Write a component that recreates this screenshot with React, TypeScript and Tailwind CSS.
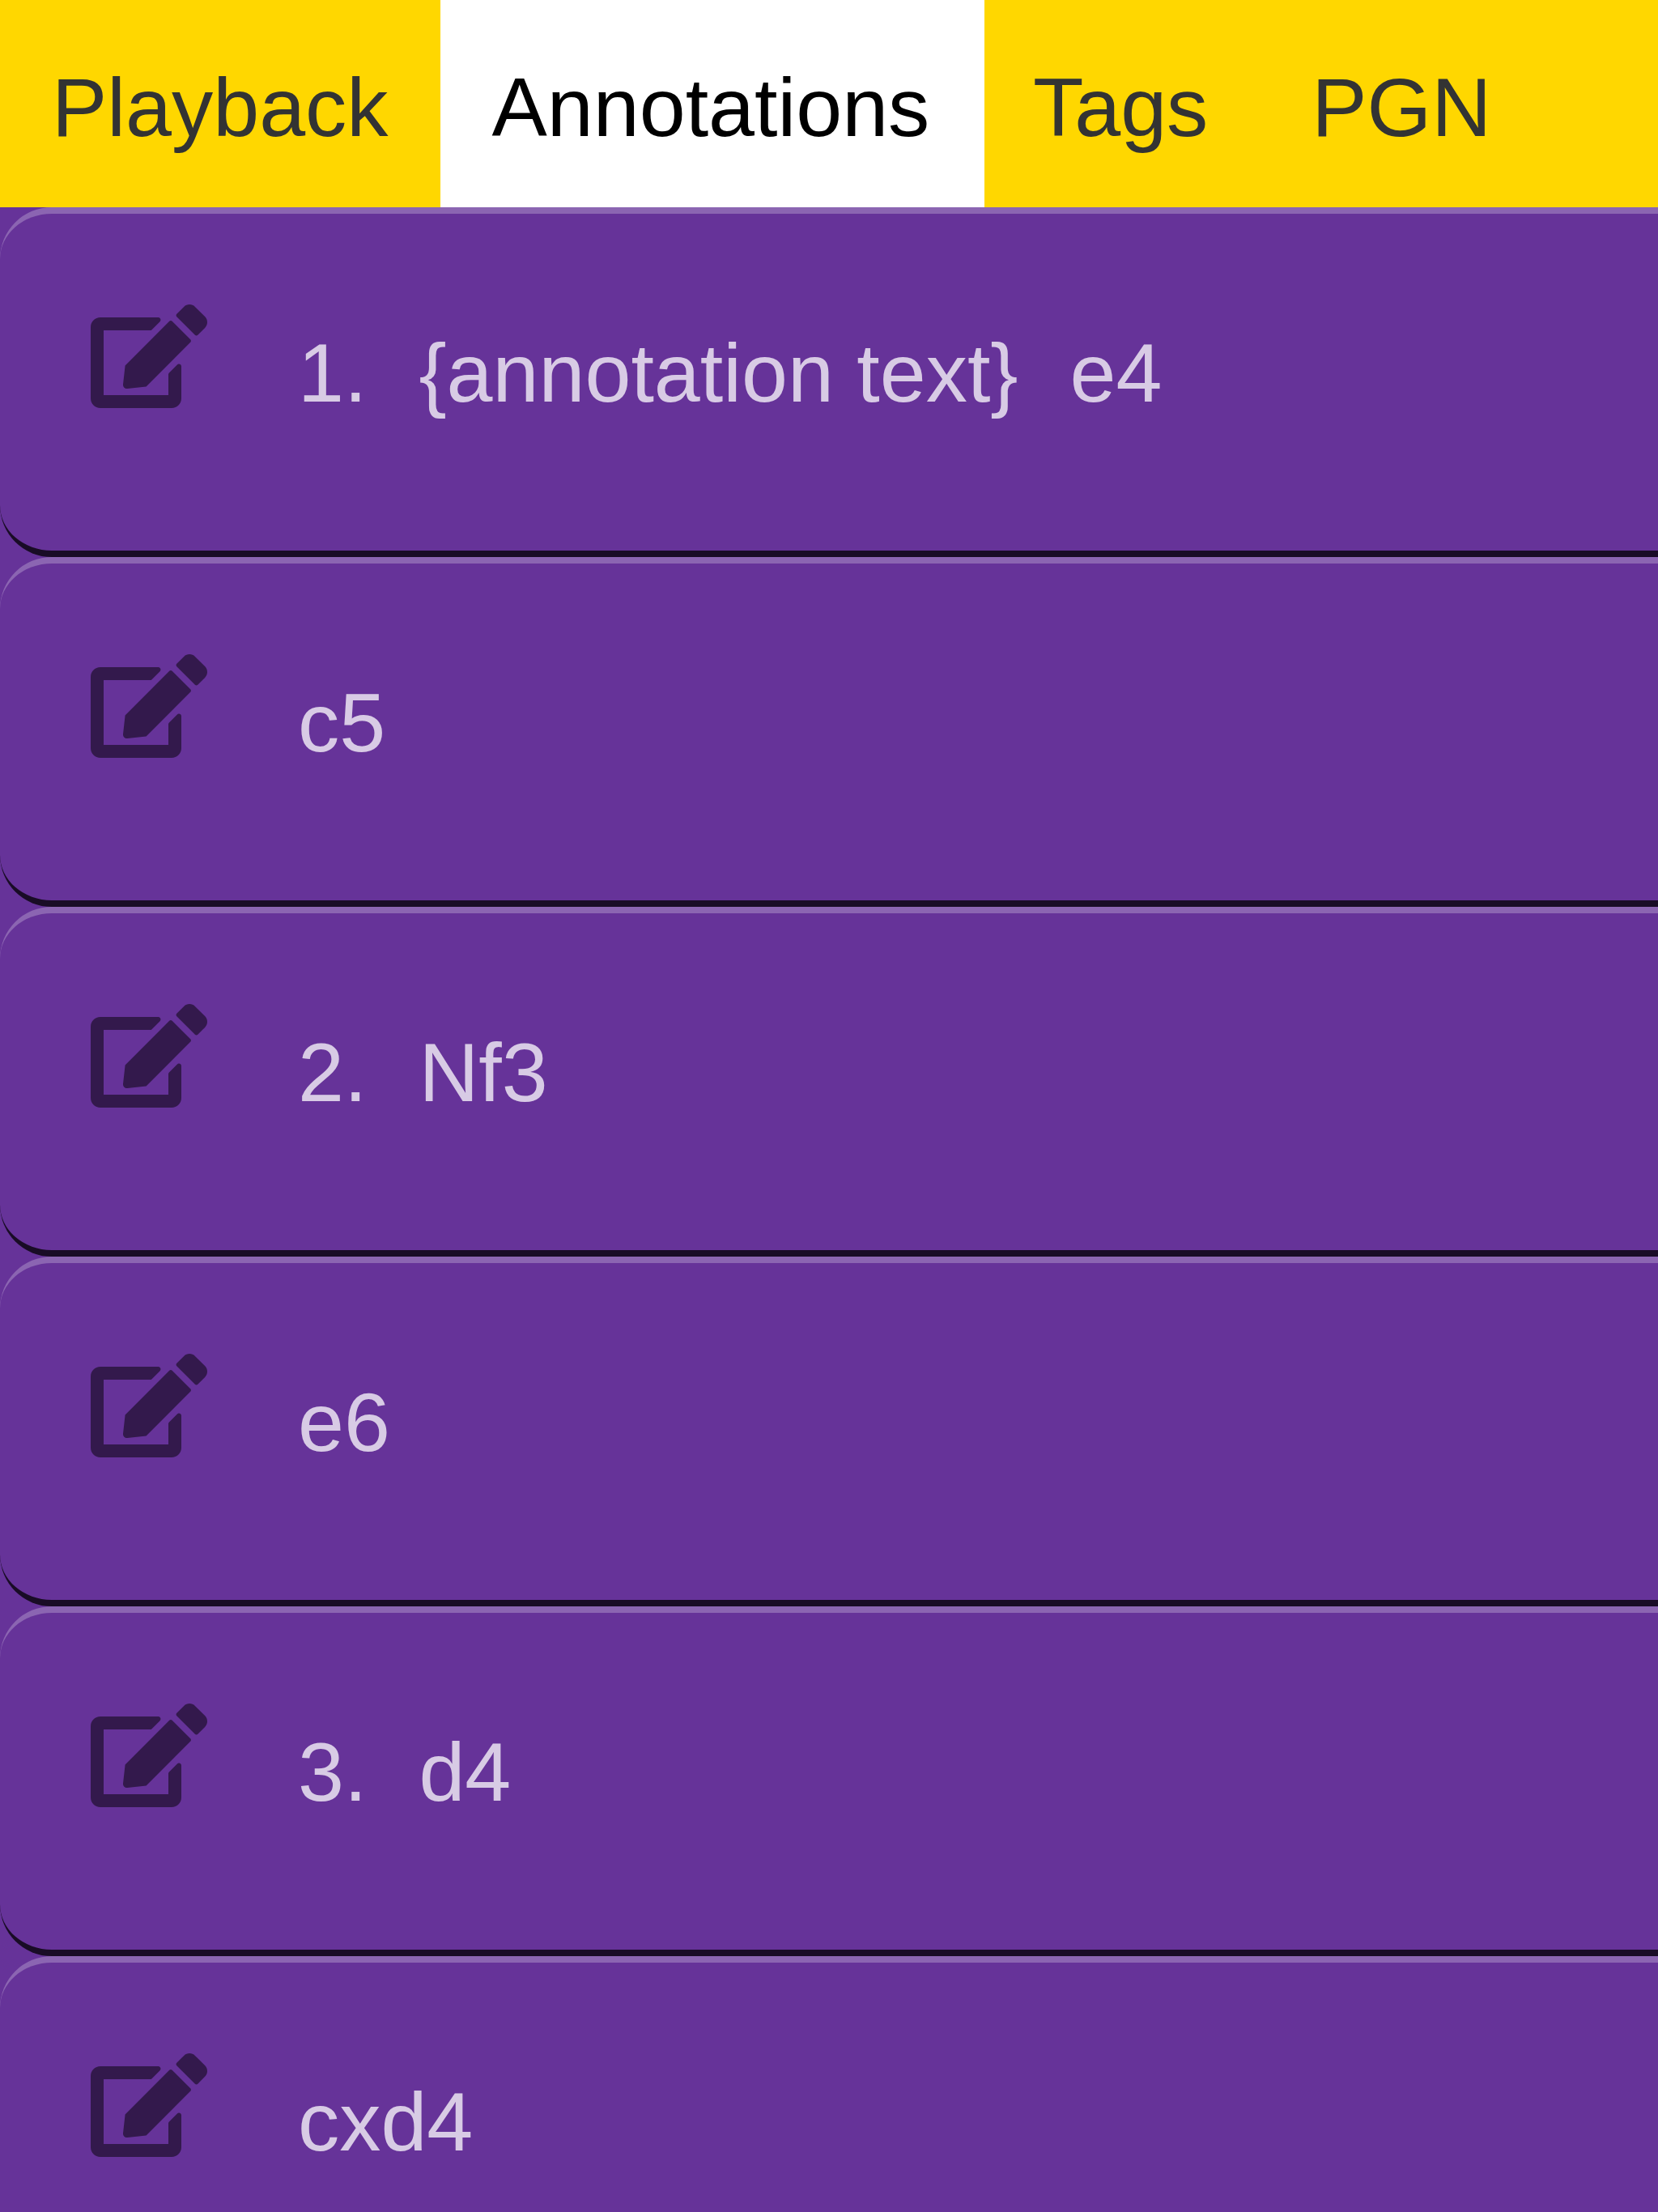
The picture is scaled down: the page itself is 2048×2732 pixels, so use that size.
import { FaEdit } from "react-icons/fa";

const moves: string[][] = [
  ["1.", "{annotation text}", "e4"],
  ["c5"],
  ["2.", "Nf3"],
  ["e6"],
  ["3.", "d4"],
  ["cxd4"],
];

const tabs = [
  { label: "Playback", style: "w-[544px] pl-16 text-[#333333]" },
  { label: "Annotations", style: "-mr-1 w-[672px] bg-white pl-[63.5px] text-black" },
  { label: "Tags", style: "px-16 text-[#333333]" },
  { label: "PGN", style: "px-16 text-[#333333]" },
];

function MoveRow({ parts }: { parts: string[] }) {
  return (
    <li className="flex h-[432px] shrink-0 rounded-l-[64px] border-t-8 border-b-8 border-t-white/25 border-b-black/75 pl-28">
      <FaEdit className="mt-28 h-32 w-36 shrink-0 text-black/50" />
      <div className="ml-28 flex gap-16 pt-[133px] leading-[127px] whitespace-nowrap text-white/75">
        {parts.map((part) => (
          <span key={part}>{part}</span>
        ))}
      </div>
    </li>
  );
}

export default function App() {
  return (
    <div className="flex h-[2732px] w-[2048px] flex-col overflow-hidden bg-[#663399] font-['Liberation_Sans',Arial,sans-serif] text-[102.4px]">
      <nav className="flex h-64 shrink-0 bg-[#ffd700] leading-[127px]">
        {tabs.map(({ label, style }) => (
          <a key={label} className={`block h-64 shrink-0 pt-[69px] ${style}`}>
            {label}
          </a>
        ))}
      </nav>
      <ul className="flex flex-col">
        {moves.map((parts) => (
          <MoveRow key={parts.join(" ")} parts={parts} />
        ))}
      </ul>
    </div>
  );
}
